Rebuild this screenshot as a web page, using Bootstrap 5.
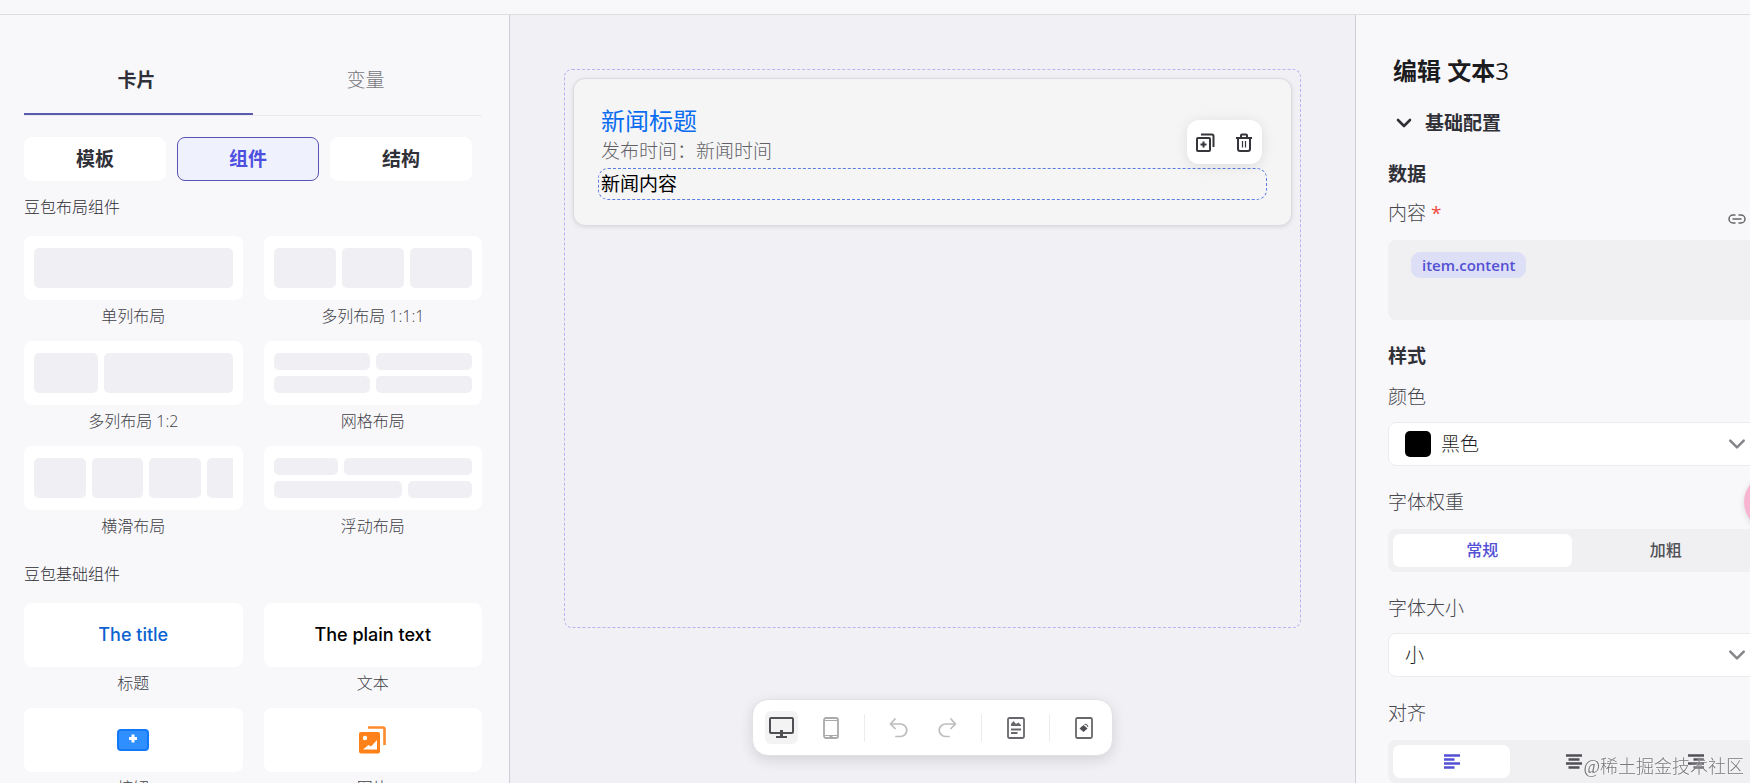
<!DOCTYPE html>
<html lang="zh-CN">
<head>
<meta charset="utf-8">
<meta name="viewport" content="width=device-width, initial-scale=1">
<title>卡片编辑器</title>
<link href="https://cdn.jsdelivr.net/npm/bootstrap@5.3.0/dist/css/bootstrap.min.css" rel="stylesheet">
<style>
  :root { --ink: #303038; --brand: #5350d4; --fill: #f0f0f4; }
  body { font-family: "Open Sans", "Noto Sans CJK SC", sans-serif; color: var(--ink); background: #f8f8fb; }
  svg { display: block; }
  button { font-family: inherit; }
  .page-top { height: 15px; border-bottom: 1px solid #dddde2; }
  .side-left { width: 510px; border-right: 1px solid #cfcfd5; padding: 28px 27px 0 24px; }
  .side-right { width: 395px; border-left: 1px solid #cfcfd5; padding: 40px 0 0 32px; }
  .side-inner { margin-right: -10px; }

  .main-tabs { border-bottom: 1px solid #ebebee; margin-bottom: 21px; }
  .main-tabs .nav-link { font-size: 19px; line-height: 28px; padding: 23px 4px 19px 0; color: #76767c; background: none; border: 0; border-bottom: 2px solid transparent; border-radius: 0; font-weight: 300; }
  .main-tabs .nav-link.active { color: var(--ink); font-weight: 700; border-color: #5a5bb0; }
  .kinds { gap: 11px; margin-right: 10px; }
  .kinds .btn { height: 44px; border-radius: 8px; border: 1px solid #fff; background: #fff; color: var(--ink); font-size: 19px; line-height: 28px; font-weight: 700; padding: 0; }
  .kinds .btn.active { background: #eff1fd; border-color: #5b52b8; color: #4e4fe0; }
  .group-title { font-size: 16px; line-height: 24px; font-weight: 300; margin: 14px 0 17px; color: #2c2c32; }
  .group-next { margin-top: 24px; }
  .part-grid { display: grid; grid-template-columns: 1fr 1fr; gap: 13px 21px; }
  .part { border: 0; background: none; padding: 0; color: #404046; font-size: 16px; line-height: 24px; font-weight: 300; }
  .part-box { height: 64px; border-radius: 8px; background: #fff; padding: 12px 10px; margin-bottom: 4px; gap: 6px; font-family: Inter, sans-serif; font-size: 18px; font-weight: 500; overflow: hidden; }
  .part-row { display: flex; flex: 1 1 0; gap: 6px; }
  .part-box i { background: var(--fill); border-radius: 5px; flex: 1 1 0; }
  .part-box .f2 { flex-grow: 2; }
  .part-box .half { flex: 0 0 26px; border-radius: 5px 0 0 5px; }

  .stage { background: #f0f0f5; padding: 54px 54px 27px; }
  .drop-zone { border: 1px dashed #b7b5ef; border-radius: 8px; padding: 8px; margin-bottom: 71px; }
  .news { background: #f5f5f6; border: 1px solid #dcdce0; border-radius: 12px; padding: 27px 24px 25px; box-shadow: 0 1px 4px rgba(0,0,0,.1); }
  .news-title { font-size: 24px; line-height: 30px; color: #0a6cf0; padding-left: 3px; margin: 0; font-weight: 400; }
  .news-time { font-size: 19px; line-height: 30px; color: #626266; padding-left: 3px; margin-bottom: 2px; font-weight: 300; }
  .news-body { border: 1px dashed #5a7ce0; border-radius: 10px; font-size: 19px; line-height: 30px; color: #000; padding-left: 2px; font-weight: 400; }
  .float-tools { top: 41px; right: 29px; width: 75px; height: 44px; border-radius: 12px; background: #fff; box-shadow: 0 2px 14px rgba(0,0,0,.1); padding: 0 9px; }
  .icon-btn { border: 0; background: none; padding: 0; display: flex; align-items: center; justify-content: center; }
  .dock { height: 57px; border-radius: 16px; background: #fff; border: 1px solid #e2e2e5; box-shadow: 0 4px 14px rgba(0,0,0,.12); padding: 0 12px; }
  .dock .icon-btn { width: 33px; height: 33px; border-radius: 6px; }
  .dock .icon-btn.active { background: #f3f3f4; }
  .dock .rule { width: 1px; height: 28px; background: #ececee; margin: 0 17px; }

  .panel-title { font-size: 24px; line-height: 32px; font-weight: 700; color: #1c1c20; margin: 0 0 22px 5px; }
  .fold { border: 0; background: none; padding: 0 0 0 8px; gap: 13px; font-size: 19px; line-height: 28px; font-weight: 700; color: var(--ink); margin-bottom: 23px; }
  .head { font-size: 19px; line-height: 28px; font-weight: 700; margin: 0 0 11px; color: var(--ink); }
  .head-style { margin-bottom: 13px; }
  .field-name { font-size: 19px; line-height: 28px; font-weight: 300; color: #46464c; display: block; margin-bottom: 11px; }
  .bind { margin: 0 14px 0 0; }
  .rich-box { height: 80px; border-radius: 8px; background: #f0f0f2; padding: 12px 23px; margin: 2px 0 22px; }
  .token { background: #dddff6; color: var(--brand); border-radius: 9px; font-size: 15px; line-height: 26px; font-weight: 600; padding: 0 11px; display: inline-block; }
  .pick { height: 44px; background: #fff; border: 1px solid #ececef; border-radius: 8px; padding-left: 16px; margin-bottom: 22px; }
  .pick .swatch { width: 26px; height: 26px; border-radius: 5px; background: #000; margin-right: 10px; flex: none; }
  .pick .form-select { border: 0; background-color: transparent; padding: 0; font-size: 19px; font-weight: 300; line-height: 28px; color: #1c1c20; height: 42px;
    background-image: url("data:image/svg+xml,%3csvg xmlns='http://www.w3.org/2000/svg' viewBox='0 0 16 16'%3e%3cpath fill='none' stroke='%2385858a' stroke-width='2.2' stroke-linecap='round' stroke-linejoin='round' d='M2 5l6 6 6-6'/%3e%3c/svg%3e"); background-size: 18px 18px; background-position: right 13px center; }
  .seg { background: #f0f0f2; border-radius: 8px; height: 43px; padding: 5px; gap: 5px; margin: 13px 0 22px; }
  .seg .btn { flex: 1 1 0; height: 33px; border: 0; border-radius: 7px; padding: 0; font-size: 16px; line-height: 33px; font-weight: 500; color: #505056; display: flex; align-items: center; justify-content: center; }
  .seg .btn-check:checked + .btn { background: #fff; color: var(--brand); }
  .helper { position: fixed; right: -50px; top: 474px; width: 56px; height: 56px; border-radius: 50%; background: #f8b4d0; border: 0; box-shadow: 0 2px 6px rgba(0,0,0,.12); }
  .credit { position: fixed; right: 6px; bottom: 3px; font-family: "Liberation Serif", "Noto Sans CJK SC", serif; font-size: 18px; line-height: 26px; font-weight: 300; color: #77777c; text-shadow: 0 0 2px #fff; }
</style>
</head>
<body class="vh-100 overflow-hidden d-flex flex-column">
<header class="page-top flex-shrink-0"></header>
<div class="d-flex flex-grow-1 overflow-hidden">

  <aside class="side-left flex-shrink-0 overflow-hidden">
    <ul class="nav nav-fill main-tabs">
      <li class="nav-item w-50"><button type="button" class="nav-link active w-100">卡片</button></li>
      <li class="nav-item w-50"><button type="button" class="nav-link w-100">变量</button></li>
    </ul>
    <div class="d-flex kinds">
      <button type="button" class="btn flex-fill w-100">模板</button>
      <button type="button" class="btn flex-fill w-100 active">组件</button>
      <button type="button" class="btn flex-fill w-100">结构</button>
    </div>

    <h2 class="group-title">豆包布局组件</h2>
    <div class="part-grid">
      <button type="button" class="part"><span class="part-box d-flex"><i></i></span>单列布局</button>
      <button type="button" class="part"><span class="part-box d-flex"><i></i><i></i><i></i></span>多列布局 1:1:1</button>
      <button type="button" class="part"><span class="part-box d-flex"><i></i><i class="f2"></i></span>多列布局 1:2</button>
      <button type="button" class="part"><span class="part-box d-flex flex-column">
        <span class="part-row"><i></i><i></i></span><span class="part-row"><i></i><i></i></span></span>网格布局</button>
      <button type="button" class="part"><span class="part-box d-flex"><i></i><i></i><i></i><i class="half"></i></span>横滑布局</button>
      <button type="button" class="part"><span class="part-box d-flex flex-column">
        <span class="part-row"><i></i><i class="f2"></i></span><span class="part-row"><i class="f2"></i><i></i></span></span>浮动布局</button>
    </div>

    <h2 class="group-title group-next">豆包基础组件</h2>
    <div class="part-grid">
      <button type="button" class="part"><span class="part-box d-flex align-items-center justify-content-center" style="color:#0b62d0">The title</span>标题</button>
      <button type="button" class="part"><span class="part-box d-flex align-items-center justify-content-center" style="color:#000">The plain text</span>文本</button>
      <button type="button" class="part"><span class="part-box d-flex align-items-center justify-content-center">
        <svg width="32" height="22" viewBox="0 0 32 22"><rect x="1" y="1" width="30" height="20" rx="3" fill="#2f8fff" stroke="#1278f5" stroke-width="2"/><path d="M16 5.500v8M12 9.500h8" stroke="#fff" stroke-width="3"/></svg></span>按钮</button>
      <button type="button" class="part"><span class="part-box d-flex align-items-center justify-content-center">
        <svg width="27" height="28" viewBox="0 0 27 28"><path d="M9 1.500H24Q25.500 1.500 25.500 3V19" fill="none" stroke="#ff8a2b" stroke-width="2.600"/><rect y="6" width="21" height="21.500" rx="2" fill="#ff811a"/><circle cx="6" cy="12" r="2.200" fill="#fff"/><path d="M4 23.500l5.500-4.500 2.500 1.500 6-6.500v9.500z" fill="#fff"/></svg></span>图片</button>
    </div>
  </aside>

  <main class="stage flex-grow-1 d-flex flex-column">
    <section class="drop-zone flex-grow-1">
      <article class="news position-relative">
        <h1 class="news-title">新闻标题</h1>
        <p class="news-time">发布时间：新闻时间</p>
        <div class="news-body">新闻内容</div>
        <div class="float-tools position-absolute d-flex align-items-center justify-content-between">
          <button type="button" class="icon-btn" aria-label="复制"><svg width="19" height="19" viewBox="0 0 19 19" fill="none" stroke="#35353a" stroke-width="2"><rect x="1" y="5" width="13" height="13" rx="1"/><path d="M5 1.500H16Q17.500 1.500 17.500 3V14M7.500 8.500v6M4.500 11.500h6"/></svg></button>
          <button type="button" class="icon-btn" aria-label="删除"><svg width="18" height="19" viewBox="0 0 18 19" fill="none" stroke="#35353a" stroke-width="2"><path d="M1 5h16M6 4.500V2.500Q6 1.500 7 1.500h4Q12 1.500 12 2.500v2M3 5.500V16Q3 18 5 18h8Q15 18 15 16V5.500"/><path d="M7.500 8v6.500M10.500 8v6.500" stroke-width="1.200"/></svg></button>
        </div>
      </article>
    </section>
    <div class="dock d-flex align-items-center align-self-center flex-shrink-0">
      <button type="button" class="icon-btn active" aria-label="桌面"><svg width="25" height="22" viewBox="0 0 25 22" fill="none" stroke="#505054" stroke-width="2"><rect x="1" y="1" width="23" height="15" rx="1"/><path d="M12.500 13v6"  stroke-width="3"/><path d="M7 20h11"/></svg></button>
      <button type="button" class="icon-btn ms-3" aria-label="手机"><svg width="16" height="22" viewBox="0 0 16 22" fill="none" stroke="#aaaaad" stroke-width="1.800"><rect x="1" y="1" width="14" height="20" rx="2"/><path d="M1.500 3.500h13M1.500 18.500h13" stroke-width="1.200"/><path d="M6.500 19.500h3"/></svg></button>
      <span class="rule"></span>
      <button type="button" class="icon-btn" aria-label="撤销"><svg width="19" height="20" viewBox="0 0 19 20" fill="none" stroke="#bdbdc0" stroke-width="1.700" stroke-linecap="round" stroke-linejoin="round"><path d="M6 1L1.500 6 6 10.500M2 6h9.500a6 6 0 0 1 0 12.500H7"/></svg></button>
      <button type="button" class="icon-btn ms-3" aria-label="重做"><svg width="19" height="20" viewBox="0 0 19 20" fill="none" stroke="#bdbdc0" stroke-width="1.700" stroke-linecap="round" stroke-linejoin="round"><path d="M13 1l4.500 5-4.500 4.500M17 6H7.500a6 6 0 0 0 0 12.500H11"/></svg></button>
      <span class="rule"></span>
      <button type="button" class="icon-btn" aria-label="模板"><svg width="18" height="22" viewBox="0 0 18 22" fill="none" stroke="#68686c" stroke-width="1.800"><rect x="1" y="1" width="16" height="20" rx="1.500"/><path d="M4 9V7l2.500-3 2.500 3 2.500-1.500L14 8v1z" fill="#68686c" stroke="none"/><path d="M4 12.500h10M4 16h6.500"/></svg></button>
      <span class="rule"></span>
      <button type="button" class="icon-btn" aria-label="预览"><svg width="18" height="22" viewBox="0 0 18 22" fill="none" stroke="#68686c" stroke-width="1.800"><rect x="1" y="1" width="16" height="20" rx="1.500"/><path d="M8.500 8l4 3.500-4 3.500-4-3.500z" fill="#505054" stroke="none"/><path d="M9.500 7.500Q12.500 7 12.800 10" stroke-width="1.200"/></svg></button>
    </div>
  </main>

  <aside class="side-right flex-shrink-0 overflow-hidden">
    <div class="side-inner">
      <h2 class="panel-title">编辑 文本<span class="fw-normal">3</span></h2>
      <button type="button" class="fold d-flex align-items-center"><svg width="16" height="11" viewBox="0 0 16 11" fill="none" stroke="#303034" stroke-width="2.600" stroke-linecap="round" stroke-linejoin="round"><path d="M2 2l6 6 6-6"/></svg>基础配置</button>

      <h3 class="head">数据</h3>
      <div class="d-flex justify-content-between">
        <span class="field-name" id="content-name">内容 <span class="fw-normal" style="color:#f04a3c">*</span></span>
        <button type="button" class="icon-btn bind" aria-label="绑定变量"><svg width="18" height="10" viewBox="0 0 18 10" fill="none" stroke="#66666a" stroke-width="1.500"><path d="M7.500 1H5a4 4 0 0 0 0 8h2.500M10.500 1H13a4 4 0 0 1 0 8h-2.500M4.500 5h9"/></svg></button>
      </div>
      <div class="rich-box" role="textbox" aria-labelledby="content-name"><span class="token">item.content</span></div>

      <h3 class="head head-style">样式</h3>
      <label class="field-name" for="color">颜色</label>
      <div class="pick d-flex align-items-center"><span class="swatch"></span><select class="form-select" id="color"><option>黑色</option></select></div>

      <span class="field-name">字体权重</span>
      <div class="seg d-flex">
        <input type="radio" class="btn-check" name="weight" id="w1" checked><label class="btn" for="w1">常规</label>
        <input type="radio" class="btn-check" name="weight" id="w2"><label class="btn" for="w2">加粗</label>
      </div>

      <label class="field-name" for="size">字体大小</label>
      <div class="pick d-flex align-items-center"><select class="form-select" id="size"><option>小</option></select></div>

      <span class="field-name">对齐</span>
      <div class="seg d-flex">
        <input type="radio" class="btn-check" name="align" id="a1" checked><label class="btn" for="a1" aria-label="左对齐"><svg width="16" height="15" viewBox="0 0 16 15" stroke="currentColor" stroke-width="2.400"><path d="M0 1.500h16M0 5.500h10.500M0 9.500h16M0 13.500h10.500"/></svg></label>
        <input type="radio" class="btn-check" name="align" id="a2"><label class="btn" for="a2" aria-label="居中"><svg width="16" height="15" viewBox="0 0 16 15" stroke="currentColor" stroke-width="2.400"><path d="M0 1.500h16M2.500 5.500h11M0 9.500h16M2.500 13.500h11"/></svg></label>
        <input type="radio" class="btn-check" name="align" id="a3"><label class="btn" for="a3" aria-label="右对齐"><svg width="16" height="15" viewBox="0 0 16 15" stroke="currentColor" stroke-width="2.400"><path d="M0 1.500h16M5.500 5.500h10.500M0 9.500h16M5.500 13.500h10.500"/></svg></label>
      </div>
    </div>
  </aside>
</div>
<button type="button" class="helper" aria-label="助手"></button>
<div class="credit">@稀土掘金技术社区</div>
<script src="https://cdn.jsdelivr.net/npm/bootstrap@5.3.0/dist/js/bootstrap.bundle.min.js"></script>
</body>
</html>
